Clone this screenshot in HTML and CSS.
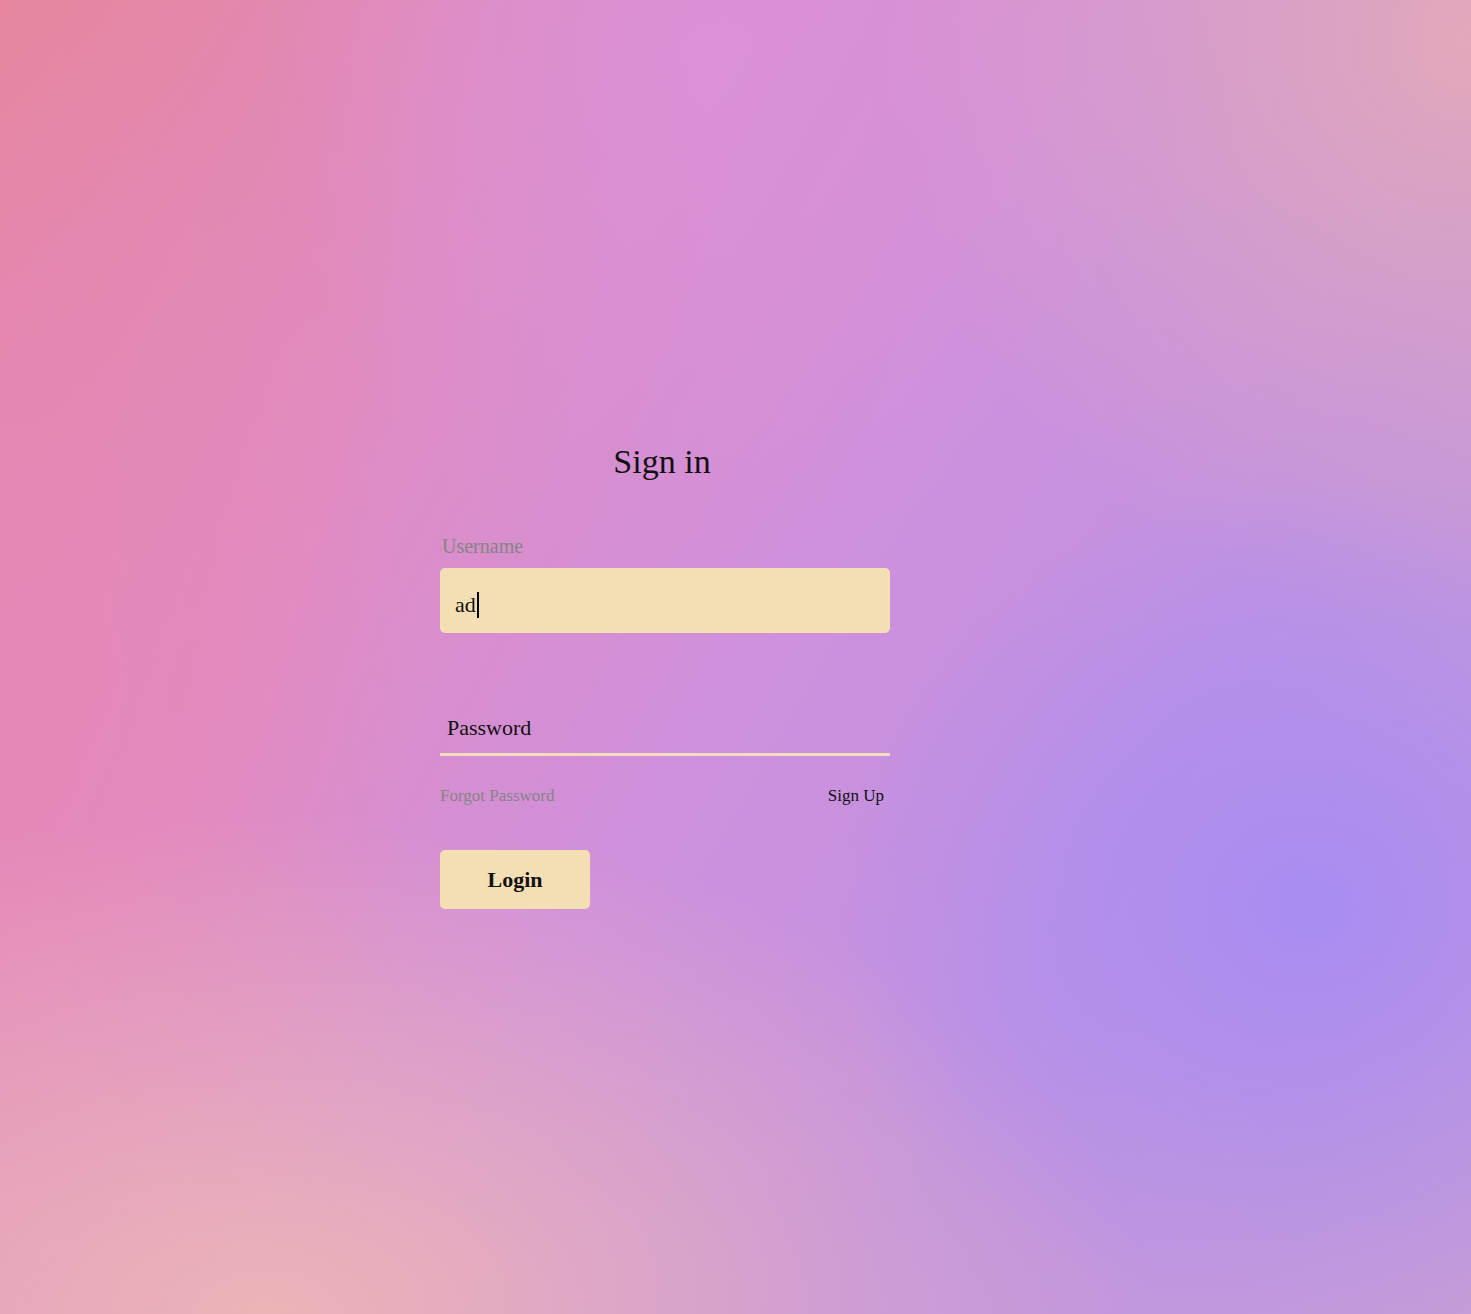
FILE: index.html
```html
<!DOCTYPE html>
<html lang="en">
<head>
<meta charset="utf-8">
<title>Sign in</title>
<link rel="stylesheet" href="styles.css">
</head>
<body>
<main class="page">
  <div class="frame">
    <form class="login-form">
      <h1 class="title">Sign in</h1>
      <label class="label" for="username">Username</label>
      <div class="field-filled" id="username">ad<span class="caret"></span></div>
      <input class="field-line" type="password" placeholder="Password">
      <div class="links">
        <a class="link muted" href="#">Forgot Password</a>
        <a class="link" href="#">Sign Up</a>
      </div>
      <button class="btn" type="button">Login</button>
    </form>
  </div>
</main>
</body>
</html>
```
FILE: styles.css
```css
html, body {
  margin: 0;
  padding: 0;
  height: 100%;
}
body {
  font-family: "Liberation Serif", "Times New Roman", serif;
  background:
    radial-gradient(ellipse 32% 32% at 89% 69%, rgba(168,140,242,1) 0%, rgba(168,140,242,0) 100%),
    radial-gradient(ellipse 40% 45% at 100% 3%, rgba(226,168,186,1) 0%, rgba(226,168,186,0) 100%),
    radial-gradient(ellipse 60% 38% at 18% 100%, rgba(236,180,182,1) 0%, rgba(236,180,182,0) 100%),
    radial-gradient(ellipse 30% 40% at 48% 4%, rgba(218,146,216,0.85) 0%, rgba(218,146,216,0) 100%),
    radial-gradient(ellipse 28% 55% at 0% 55%, rgba(230,136,184,0.9) 0%, rgba(230,136,184,0) 100%),
    linear-gradient(120deg, #e6859d 0%, #df8cc4 28%, #cf90dc 50%, #bf92e2 72%, #c49cd8 100%);
  min-height: 1314px;
}
.page {
  display: flex;
  justify-content: center;
  padding-top: 440px;
}
.frame {
  width: 591px;
}
.login-form {
  width: 450px;
  display: flex;
  flex-direction: column;
}
.title {
  margin: 0;
  padding-right: 6px;
  font-weight: normal;
  font-size: 34px;
  line-height: 44px;
  text-align: center;
  color: #111;
}
.label {
  margin-top: 50px;
  margin-left: 2px;
  font-size: 20px;
  line-height: 24px;
  color: #858585;
}
.field-filled {
  margin-top: 10px;
  height: 65px;
  box-sizing: border-box;
  background: #f4deb4;
  border-radius: 5px;
  padding: 8px 15px 0;
  display: flex;
  align-items: center;
  font-size: 22px;
  color: #111;
}
.caret {
  display: inline-block;
  width: 2px;
  height: 26px;
  background: #000;
  margin-left: 1px;
}
.field-line {
  margin-top: 70px;
  height: 53px;
  box-sizing: border-box;
  border: none;
  border-bottom: 3px solid #f4dcc0;
  background: transparent;
  padding: 0 7px;
  font-family: inherit;
  font-size: 22px;
  outline: none;
}
.field-line::placeholder {
  color: #111;
  opacity: 1;
}
.links {
  display: flex;
  justify-content: space-between;
  margin-top: 30px;
  padding-right: 6px;
  font-size: 17px;
  line-height: 20px;
}
.link {
  color: #111;
  text-decoration: none;
}
.link.muted {
  color: #858585;
}
.btn {
  margin-top: 44px;
  width: 150px;
  height: 59px;
  border: none;
  border-radius: 5px;
  background: #f4deb4;
  font-family: inherit;
  font-weight: bold;
  font-size: 22px;
  color: #111;
  cursor: pointer;
}
```
